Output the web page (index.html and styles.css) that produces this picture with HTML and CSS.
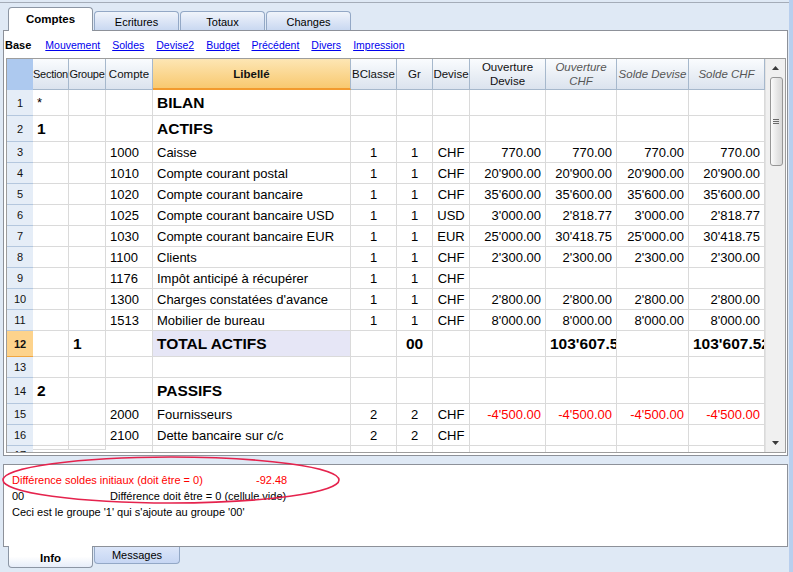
FILE: index.html
```html
<!DOCTYPE html>
<html lang="fr">
<head>
<meta charset="utf-8">
<title>Comptes</title>
<link rel="stylesheet" href="styles.css">
</head>
<body>
<div class="main">
  <div class="topspace"></div>
  <div class="topline"></div>
  <div class="tabs">
    <div class="tab active">Comptes</div>
    <div class="tab">Ecritures</div>
    <div class="tab">Totaux</div>
    <div class="tab">Changes</div>
  </div>
  <div class="panel">
    <div class="views">
      <span class="view-cur">Base</span>
      <a class="view" href="#">Mouvement</a>
      <a class="view" href="#">Soldes</a>
      <a class="view" href="#">Devise2</a>
      <a class="view" href="#">Budget</a>
      <a class="view" href="#">Précédent</a>
      <a class="view" href="#">Divers</a>
      <a class="view" href="#">Impression</a>
    </div>
    <div class="grid">
      <div class="rows">
        <div class="row head">
          <div class="h hn"></div>
          <div class="h tight">Section</div>
          <div class="h tight">Groupe</div>
          <div class="h">Compte</div>
          <div class="h hsel">Libellé</div>
          <div class="h">BClasse</div>
          <div class="h">Gr</div>
          <div class="h">Devise</div>
          <div class="h">Ouverture<br>Devise</div>
          <div class="h it">Ouverture<br>CHF</div>
          <div class="h it">Solde Devise</div>
          <div class="h it">Solde CHF</div>
        </div>

        <div class="row tall">
          <div class="n">1</div><div class="c l">*</div><div class="c"></div><div class="c"></div>
          <div class="c l big">BILAN</div><div class="c"></div><div class="c"></div><div class="c"></div>
          <div class="c"></div><div class="c"></div><div class="c"></div><div class="c"></div>
        </div>
        <div class="row tall">
          <div class="n">2</div><div class="c l big">1</div><div class="c"></div><div class="c"></div>
          <div class="c l big">ACTIFS</div><div class="c"></div><div class="c"></div><div class="c"></div>
          <div class="c"></div><div class="c"></div><div class="c"></div><div class="c"></div>
        </div>
        <div class="row">
          <div class="n">3</div><div class="c"></div><div class="c"></div><div class="c l">1000</div>
          <div class="c l">Caisse</div><div class="c m">1</div><div class="c m">1</div><div class="c m">CHF</div>
          <div class="c r">770.00</div><div class="c r">770.00</div><div class="c r">770.00</div><div class="c r">770.00</div>
        </div>
        <div class="row">
          <div class="n">4</div><div class="c"></div><div class="c"></div><div class="c l">1010</div>
          <div class="c l">Compte courant postal</div><div class="c m">1</div><div class="c m">1</div><div class="c m">CHF</div>
          <div class="c r">20'900.00</div><div class="c r">20'900.00</div><div class="c r">20'900.00</div><div class="c r">20'900.00</div>
        </div>
        <div class="row">
          <div class="n">5</div><div class="c"></div><div class="c"></div><div class="c l">1020</div>
          <div class="c l">Compte courant bancaire</div><div class="c m">1</div><div class="c m">1</div><div class="c m">CHF</div>
          <div class="c r">35'600.00</div><div class="c r">35'600.00</div><div class="c r">35'600.00</div><div class="c r">35'600.00</div>
        </div>
        <div class="row">
          <div class="n">6</div><div class="c"></div><div class="c"></div><div class="c l">1025</div>
          <div class="c l">Compte courant bancaire USD</div><div class="c m">1</div><div class="c m">1</div><div class="c m">USD</div>
          <div class="c r">3'000.00</div><div class="c r">2'818.77</div><div class="c r">3'000.00</div><div class="c r">2'818.77</div>
        </div>
        <div class="row">
          <div class="n">7</div><div class="c"></div><div class="c"></div><div class="c l">1030</div>
          <div class="c l">Compte courant bancaire EUR</div><div class="c m">1</div><div class="c m">1</div><div class="c m">EUR</div>
          <div class="c r">25'000.00</div><div class="c r">30'418.75</div><div class="c r">25'000.00</div><div class="c r">30'418.75</div>
        </div>
        <div class="row">
          <div class="n">8</div><div class="c"></div><div class="c"></div><div class="c l">1100</div>
          <div class="c l">Clients</div><div class="c m">1</div><div class="c m">1</div><div class="c m">CHF</div>
          <div class="c r">2'300.00</div><div class="c r">2'300.00</div><div class="c r">2'300.00</div><div class="c r">2'300.00</div>
        </div>
        <div class="row">
          <div class="n">9</div><div class="c"></div><div class="c"></div><div class="c l">1176</div>
          <div class="c l">Impôt anticipé à récupérer</div><div class="c m">1</div><div class="c m">1</div><div class="c m">CHF</div>
          <div class="c r"></div><div class="c r"></div><div class="c r"></div><div class="c r"></div>
        </div>
        <div class="row">
          <div class="n">10</div><div class="c"></div><div class="c"></div><div class="c l">1300</div>
          <div class="c l">Charges constatées d'avance</div><div class="c m">1</div><div class="c m">1</div><div class="c m">CHF</div>
          <div class="c r">2'800.00</div><div class="c r">2'800.00</div><div class="c r">2'800.00</div><div class="c r">2'800.00</div>
        </div>
        <div class="row">
          <div class="n">11</div><div class="c"></div><div class="c"></div><div class="c l">1513</div>
          <div class="c l">Mobilier de bureau</div><div class="c m">1</div><div class="c m">1</div><div class="c m">CHF</div>
          <div class="c r">8'000.00</div><div class="c r">8'000.00</div><div class="c r">8'000.00</div><div class="c r">8'000.00</div>
        </div>
        <div class="row tall">
          <div class="n nsel">12</div><div class="c"></div><div class="c l big">1</div><div class="c"></div>
          <div class="c l big total">TOTAL ACTIFS</div><div class="c"></div><div class="c m big">00</div><div class="c"></div>
          <div class="c"></div><div class="c l big">103'607.52</div><div class="c"></div><div class="c l big">103'607.52</div>
        </div>
        <div class="row">
          <div class="n">13</div><div class="c"></div><div class="c"></div><div class="c"></div>
          <div class="c"></div><div class="c"></div><div class="c"></div><div class="c"></div>
          <div class="c"></div><div class="c"></div><div class="c"></div><div class="c"></div>
        </div>
        <div class="row tall">
          <div class="n">14</div><div class="c l big">2</div><div class="c"></div><div class="c"></div>
          <div class="c l big">PASSIFS</div><div class="c"></div><div class="c"></div><div class="c"></div>
          <div class="c"></div><div class="c"></div><div class="c"></div><div class="c"></div>
        </div>
        <div class="row">
          <div class="n">15</div><div class="c"></div><div class="c"></div><div class="c l">2000</div>
          <div class="c l">Fournisseurs</div><div class="c m">2</div><div class="c m">2</div><div class="c m">CHF</div>
          <div class="c r red">-4'500.00</div><div class="c r red">-4'500.00</div><div class="c r red">-4'500.00</div><div class="c r red">-4'500.00</div>
        </div>
        <div class="row">
          <div class="n">16</div><div class="c"></div><div class="c"></div><div class="c l">2100</div>
          <div class="c l">Dette bancaire sur c/c</div><div class="c m">2</div><div class="c m">2</div><div class="c m">CHF</div>
          <div class="c r"></div><div class="c r"></div><div class="c r"></div><div class="c r"></div>
        </div>
        <div class="row partial">
          <div class="n">17</div><div class="c"></div><div class="c"></div><div class="c l">2400</div>
          <div class="c l">Emprunt bancaire</div><div class="c m">2</div><div class="c m">2</div><div class="c m">CHF</div>
          <div class="c r red">-5'000.00</div><div class="c r red">-5'000.00</div><div class="c r red">-5'000.00</div><div class="c r red">-5'000.00</div>
        </div>
      </div>
      <div class="vscroll">
        <div class="sbtn"><svg width="7" height="4" viewBox="0 0 7 4"><path d="M0 4 L3.5 0 L7 4 Z" fill="#3a3a3a"/></svg></div>
        <div class="thumb"><span class="grip"></span><span class="grip"></span><span class="grip"></span></div>
        <div class="track"></div>
        <div class="sbtn"><svg width="7" height="4" viewBox="0 0 7 4"><path d="M0 0 L7 0 L3.5 4 Z" fill="#3a3a3a"/></svg></div>
      </div>
    </div>
  </div>
  <div class="gap"></div>
  <div class="info">
    <div class="iline red"><span class="k1">Différence soldes initiaux (doit être = 0)</span><span>-92.48</span></div>
    <div class="iline"><span class="k2">00</span><span>Différence doit être = 0 (cellule vide)</span></div>
    <div class="iline">Ceci est le groupe '1' qui s'ajoute au groupe '00'</div>
  </div>
  <div class="btabs">
    <div class="btab active">Info</div>
    <div class="btab">Messages</div>
  </div>
  <svg class="ring" width="346" height="52" viewBox="0 0 346 52"><ellipse cx="171" cy="25" rx="168" ry="23" fill="none" stroke="#e5234d" stroke-width="1.6"/></svg>
</div>
<div class="edge"></div>
</body>
</html>
```
FILE: styles.css
```css
* { box-sizing: border-box; }
html, body { margin: 0; padding: 0; }
body {
  width: 793px;
  height: 572px;
  overflow: hidden;
  display: flex;
  background: #dfe9f5;
  font-family: "Liberation Sans", Arial, sans-serif;
  color: #000;
}
.main { width: 789px; height: 572px; position: relative; }
.edge { width: 4px; height: 572px; background: #b8cfee; }
.topspace { height: 2px; }
.topline { height: 1px; background: #a4acb8; }
.tabs {
  height: 27px;
  padding-left: 8px;
  display: flex;
  align-items: flex-end;
  gap: 1px;
}
.tab {
  width: 85px;
  height: 19px;
  border: 1px solid #93a8c6;
  border-bottom: none;
  border-radius: 4px 4px 0 0;
  background: linear-gradient(#f0f4fb, #c9d8f1);
  font-size: 11px;
  display: flex;
  align-items: center;
  justify-content: center;
  padding-top: 1px;
}
.tab.active {
  height: 24px;
  margin-bottom: -1px;
  background: #fff;
  border-color: #8c96a4;
  font-weight: bold;
  font-size: 11.5px;
  position: relative;
  z-index: 1;
  padding-top: 0;
  padding-bottom: 2px;
}
.panel {
  margin-left: 3px;
  width: 785px;
  height: 426px;
  border: 1px solid #8d9199;
  background: #fff;
}
.views {
  height: 27px;
  display: flex;
  align-items: center;
  gap: 12px;
  padding-left: 1px;
  padding-top: 1px;
  font-size: 10.5px;
}
.view-cur { font-weight: bold; font-size: 11px; margin-right: 2px; }
.view { color: #0000ee; text-decoration: underline; }
.grid {
  margin-left: 2px;
  width: 780px;
  height: 395px;
  border: 1px solid #9d9d9d;
  display: flex;
  overflow: hidden;
}
.rows { width: 758px; overflow: hidden; }
.row {
  display: grid;
  grid-template-columns: 26px 36px 37px 47px 198px 46px 36px 37px 76px 71px 72px 76px;
  height: 21px;
}
.row.tall { height: 26px; }
.row.head { height: 31px; }
.row.partial { height: 21px; align-items: start; }
.row.partial .c, .row.partial .n { align-items: flex-start; padding-top: 3px; }
.h {
  background: linear-gradient(#fafcfe, #dbe3ee);
  border-right: 1px solid #a6b8cc;
  border-bottom: 1px solid #a6b8cc;
  display: flex;
  align-items: center;
  justify-content: center;
  text-align: center;
  font-size: 11.5px;
  line-height: 14px;
  color: #111;
  overflow: hidden;
  white-space: nowrap;
}
.h.tight { font-size: 11px; letter-spacing: -0.25px; }
.h.hn { background: #adc9ef; border-right: none; border-bottom-color: #adc9ef; }
.h.hsel {
  background: linear-gradient(#fde6b4, #f8c970);
  border-bottom: 2px solid #f29a2e;
  font-weight: bold;
}
.h.it { font-style: italic; color: #555; }
.n {
  background: #e5edf7;
  border-bottom: 1px solid #b4c7de;
  display: flex;
  align-items: center;
  justify-content: center;
  font-size: 11px;
  color: #111;
}
.n.nsel { background: #fdd38c; border-bottom-color: #f0a640; font-weight: bold; }
.c {
  border-right: 1px solid #dadada;
  border-bottom: 1px solid #dadada;
  display: flex;
  align-items: center;
  overflow: hidden;
  white-space: nowrap;
  font-size: 13px;
  padding: 0 4px;
}
.c.l { justify-content: flex-start; }
.c.m { justify-content: center; padding: 0; }
.c.r { justify-content: flex-end; padding-right: 4px; }
.c.big { font-weight: bold; font-size: 15.5px; }
.c.total { background: #e6e6f6; }
.red { color: #ff0000; }
.vscroll {
  width: 20px;
  height: 393px;
  background: #f0f0f0;
  border-left: 1px solid #e2e2e2;
  display: flex;
  flex-direction: column;
  align-items: center;
}
.sbtn {
  height: 18px;
  width: 100%;
  display: flex;
  align-items: center;
  justify-content: center;
}
.thumb {
  width: 13px;
  height: 89px;
  margin-left: 1px;
  border: 1px solid #969696;
  border-radius: 3px;
  background: linear-gradient(90deg, #fbfbfb, #e4e4e4 60%, #d8d8d8);
  display: flex;
  flex-direction: column;
  align-items: center;
  justify-content: center;
  gap: 1px;
}
.grip { width: 6px; height: 1px; background: #6a6a6a; }
.track { flex: 1; }
.gap { height: 8px; }
.info {
  margin-left: 3px;
  width: 785px;
  height: 83px;
  border: 1px solid #8d9199;
  background: #fff;
  padding: 7px 0 0 8px;
  font-size: 11px;
}
.iline { height: 16px; line-height: 16px; display: flex; white-space: nowrap; }
.k1 { width: 244px; }
.k2 { width: 98px; }
.btabs {
  padding-left: 8px;
  display: flex;
  align-items: flex-start;
  gap: 1px;
}
.btab {
  width: 86px;
  height: 17px;
  border: 1px solid #93a8c6;
  border-top: none;
  border-radius: 0 0 4px 4px;
  background: linear-gradient(#dce6f9, #c6d6f3);
  font-size: 11px;
  display: flex;
  align-items: center;
  justify-content: center;
}
.btab.active {
  width: 85px;
  height: 22px;
  margin-top: -1px;
  background: linear-gradient(#fff 50%, #e6edf9);
  border-color: #8c96a4;
  font-weight: bold;
  font-size: 11.5px;
  position: relative;
  z-index: 1;
  padding-top: 2px;
}
.ring { position: absolute; left: 0; top: 455px; }
```
